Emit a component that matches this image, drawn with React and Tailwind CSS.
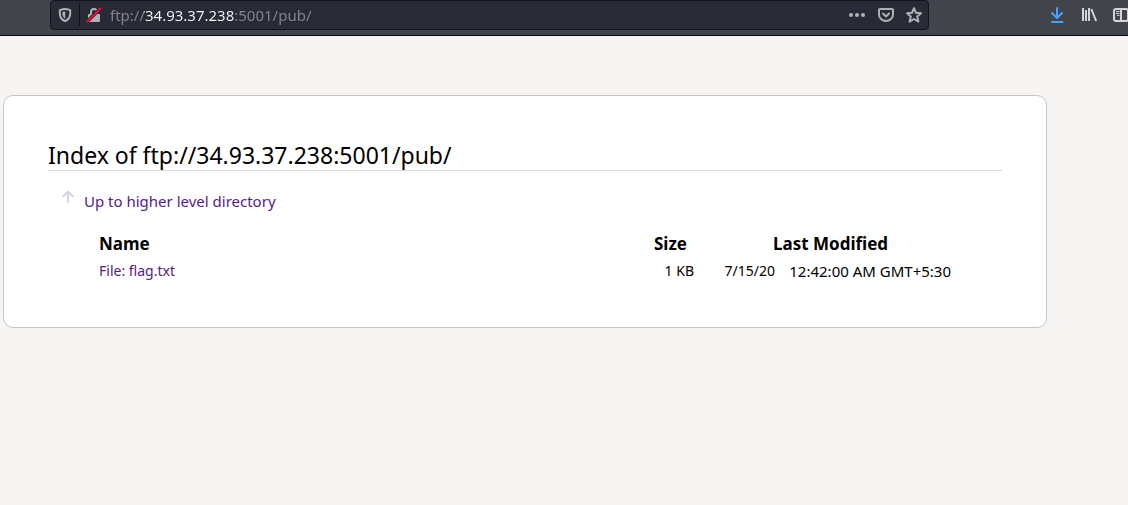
import React from "react";

function ShieldIcon() {
  return (
    <svg viewBox="0 0 16 16" className="size-4" fill="none" aria-hidden="true">
      <path d="M8 2c-1.700 0-3.500.5-5.200 1.100v3.100c0 4 1.700 6.400 5.200 8 3.500-1.600 5.200-4 5.200-8V3.100C11.500 2.500 9.700 2 8 2Z" stroke="#b1b1b5" strokeWidth="2" strokeLinejoin="round" />
      <path d="M8.200 4.500v7.200C6.300 10.600 5.400 8.800 5.400 6.200V5c.8-.3 1.800-.5 2.800-.5Z" fill="#b1b1b5" />
    </svg>
  );
}

function InsecureIcon() {
  return (
    <svg viewBox="0 0 16 16" className="size-4" fill="none" aria-hidden="true">
      <path d="M5 8V5a3 3 0 0 1 6 0v3" stroke="#b1b1b5" strokeWidth="2" />
      <rect x="2" y="7" width="12" height="8" rx="1" fill="#b1b1b5" />
      <path d="M1.200 14.600 14.200 1.600" stroke="#282a36" strokeWidth="3.600" />
      <path d="M1.200 14.600 14.400 1.400" stroke="#ff0039" strokeWidth="2" strokeLinecap="round" />
    </svg>
  );
}

function DotsIcon() {
  return (
    <svg viewBox="0 0 18 16" className="h-4 w-[18px]" fill="#b1b1b5" aria-hidden="true">
      <circle cx="3" cy="8" r="2" />
      <circle cx="9" cy="8" r="2" />
      <circle cx="15" cy="8" r="2" />
    </svg>
  );
}

function PocketIcon() {
  return (
    <svg viewBox="0 0 16 16" className="size-4" fill="none" stroke="#b1b1b5" strokeWidth="2" strokeLinecap="round" strokeLinejoin="round" aria-hidden="true">
      <path d="M2 2h12a1 1 0 0 1 1 1V7.500a7 6.500 0 0 1-14 0V3a1 1 0 0 1 1-1Z" />
      <path d="M5 6.500 8 9.500l3-3" />
    </svg>
  );
}

function StarIcon() {
  return (
    <svg viewBox="0 0 16 16" className="size-4" fill="none" stroke="#b1b1b5" strokeWidth="2" strokeLinejoin="round" aria-hidden="true">
      <path d="m8 1.200 2 4.600 5 .5-3.800 3.300 1.200 5L8 12l-4.400 2.600 1.200-5L1 6.300l5-.5Z" />
    </svg>
  );
}

function DownloadIcon() {
  return (
    <svg viewBox="0 0 16 16" className="size-4" fill="none" stroke="#45a1ff" strokeWidth="2" strokeLinecap="round" strokeLinejoin="round" aria-hidden="true">
      <path d="M8 1v9.500M3 6l5 5 5-5M3 15h10.500" />
    </svg>
  );
}

function LibraryIcon() {
  return (
    <svg viewBox="0 0 16 16" className="size-4" fill="none" stroke="#d4d4d6" strokeWidth="2" aria-hidden="true">
      <path d="M2 1v13M5 3v11M8 1v13" />
      <path d="m10.300 2 4.800 12" />
    </svg>
  );
}

function SidebarIcon() {
  return (
    <svg viewBox="0 0 16 16" className="size-4" fill="none" stroke="#d4d4d6" aria-hidden="true">
      <rect x="1" y="2" width="14" height="12" rx="2" strokeWidth="2" />
      <path d="M8 2v12" strokeWidth="2" />
      <path d="M3 4.500h3.500M3 6.500h3.500M4 8.500h2.500" strokeWidth="1" />
    </svg>
  );
}

function UpIcon() {
  return (
    <svg viewBox="0 0 16 16" className="size-4" fill="none" stroke="#d3d7e4" strokeWidth="2" aria-hidden="true">
      <path d="M8 14V3M2.700 8 8 2.700 13.300 8" />
    </svg>
  );
}

function BarButton({ label, children }) {
  return (
    <button type="button" aria-label={label} className="flex shrink-0 items-center justify-center">
      {children}
    </button>
  );
}

export default function App() {
  return (
    <div className="min-h-screen bg-[#f6f5f4] font-['Noto_Sans',sans-serif] text-black">
      <header className="flex h-9 items-start overflow-hidden border-b border-[#0c0c0d] bg-[#42444b] pl-[50px]">
        <div className="flex h-[30px] min-w-0 flex-1 items-center rounded-[4px] border border-[#14151b] bg-[#282a36] px-1.5">
          <BarButton label="Tracking protection"><ShieldIcon /></BarButton>
          <span className="mx-1.5 h-[22px] w-px bg-[#111218]" />
          <BarButton label="Connection is not secure"><InsecureIcon /></BarButton>
          <input
            type="text"
            aria-label="Address"
            defaultValue="ftp://34.93.37.238:5001/pub/"
            spellCheck={false}
            className="ml-2 min-w-0 flex-1 bg-[linear-gradient(90deg,#85868b_34px,#f9f9fa_34px,#f9f9fa_124px,#85868b_124px)] bg-clip-text text-[15px] leading-6 text-transparent caret-white outline-none"
          />
          <div className="flex items-center gap-3">
            <BarButton label="Page actions"><DotsIcon /></BarButton>
            <BarButton label="Save to Pocket"><PocketIcon /></BarButton>
            <BarButton label="Bookmark this page"><StarIcon /></BarButton>
          </div>
        </div>
        <nav className="-mr-px ml-[120px] flex h-[30px] shrink-0 items-center gap-4" aria-label="Toolbar">
          <BarButton label="Downloads"><DownloadIcon /></BarButton>
          <BarButton label="Library"><LibraryIcon /></BarButton>
          <BarButton label="Sidebars"><SidebarIcon /></BarButton>
        </nav>
      </header>

      <main className="mt-[59px] mr-[81px] ml-[3px] rounded-[10px] border border-[#c8c5c0] bg-white p-11">
        <h1 className="border-b border-[#d9d9d9] text-[23px] leading-[30px]">
          Index of ftp://34.93.37.238:5001/pub/
        </h1>
        <a href="#up" className="mt-[18px] ml-3 flex w-fit items-start gap-2 text-[15px] leading-5 text-[#551a8b]">
          <UpIcon />
          <span className="pt-0.5">Up to higher level directory</span>
        </a>
        <table className="mt-5 ml-[51px] w-[852px] max-w-full border-collapse text-sm leading-6">
          <thead>
            <tr className="text-left text-[17px] leading-7">
              <th scope="col" className="pb-0.5 leading-[26px] font-bold">Name</th>
              <th scope="col" className="w-10 pb-0.5 leading-[26px] font-bold">Size</th>
              <th scope="col" colSpan={2} className="w-[257px] pb-0.5 pl-[79px] leading-[26px] font-bold">Last Modified</th>
            </tr>
          </thead>
          <tbody>
            <tr>
              <td><a href="#flag" className="text-[#551a8b]">File: flag.txt</a></td>
              <td className="text-right whitespace-nowrap">1 KB</td>
              <td className="w-[81px] text-right">7/15/20</td>
              <td className="w-44 text-right text-[15px] leading-6 whitespace-nowrap">12:42:00 AM GMT+5:30</td>
            </tr>
          </tbody>
        </table>
      </main>
    </div>
  );
}
